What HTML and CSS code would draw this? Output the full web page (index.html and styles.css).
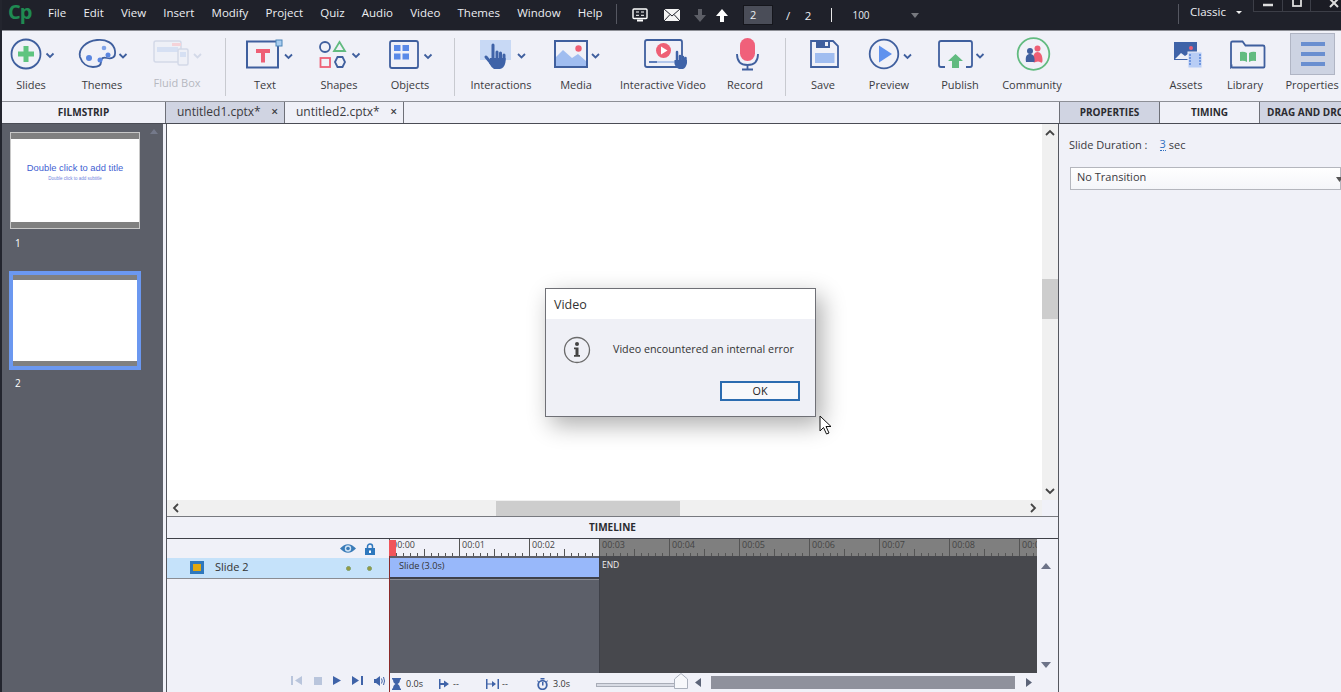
FILE: index.html
```html
<!DOCTYPE html>
<html lang="en">
<head>
<meta charset="utf-8">
<title>Adobe Captivate</title>
<link rel="stylesheet" href="styles.css">
</head>
<body>
<div class="app">
  <header class="topbar">
    <div class="logo">Cp</div>
    <nav class="menu">
      <span>File</span><span>Edit</span><span>View</span><span>Insert</span><span>Modify</span><span>Project</span><span>Quiz</span><span>Audio</span><span>Video</span><span>Themes</span><span>Window</span><span>Help</span>
    </nav>
    <div class="tsep"></div>
    <div class="cell c-a c-first"><svg width="16" height="14" viewBox="0 0 16 14"><rect x="1" y="1" width="14" height="9.5" rx="1" fill="none" stroke="#fff" stroke-width="1.4"/><path d="M4 4h3M9 4h3M4 7.300h3M9 7.300h3" stroke="#fff"/><path d="M5 12.500h6" stroke="#fff" stroke-width="2"/></svg></div>
    <div class="cell c-a"><svg width="16" height="12" viewBox="0 0 16 12"><rect width="16" height="12" fill="#f4f4f4"/><path d="M0 0l8 7 8-7M0 12l6-6.500M16 12l-6-6.500" fill="none" stroke="#1f212a"/></svg></div>
    <div class="cell c-b"><svg width="12" height="13" viewBox="0 0 12 13"><path d="M4 0h4v6h4l-6 7-6-7h4z" fill="#5c5e66"/></svg></div>
    <div class="cell c-c"><svg width="12" height="13" viewBox="0 0 12 13"><path d="M4 13h4V7h4L6 0 0 7h4z" fill="#fff"/></svg></div>
    <div class="page-input">2</div>
    <div class="cell c-d">/</div>
    <div class="cell c-e">2</div>
    <div class="cell c-f"><i class="vbar"></i></div>
    <div class="cell c-g">100</div>
    <div class="cell c-h"><svg width="8" height="5" viewBox="0 0 8 5"><path d="M0 0h8L4 5z" fill="#77797f"/></svg></div>
    <div class="tsep tsep-r"></div>
    <div class="classic">Classic</div>
    <svg class="classic-caret" width="6" height="3" viewBox="0 0 6 3"><path d="M0 0h6L3 3z" fill="#eee"/></svg>
    <div class="winctl">
      <span><svg width="10" height="10" viewBox="0 0 10 10"><path d="M0 5h10" stroke="#ddd" stroke-width="2.500"/></svg></span>
      <span><svg width="10" height="10" viewBox="0 0 10 10"><rect x="1" y="-2" width="8" height="8" fill="none" stroke="#ddd" stroke-width="1.800"/></svg></span>
      <span class="winx"><svg width="10" height="10" viewBox="0 0 10 10"><path d="M1 -1l8 8M9 -1l-8 8" stroke="#ddd" stroke-width="2"/></svg></span>
    </div>
  </header>

  <section class="toolbar">
    <div class="tool w-slides">
      <svg width="56" height="44" viewBox="2 31 56 44"><circle cx="26" cy="54" r="14.500" fill="none" stroke="#3f5f9e" stroke-width="1.800"/><path d="M26 46v16M18 54h16" stroke="#5fc47f" stroke-width="5"/><path class="chev" d="M46.500 53.500l3.500 3.500 3.500-3.500"/></svg>
      <span>Slides</span>
    </div>
    <div class="tool w-themes">
      <svg width="88" height="44" viewBox="58 31 88 44"><path d="M80 57c-2-8 6-16 17-17 9-1 17 3 18 11 1 7-4 8-8 7-4-1-6 0-6 4 0 4-3 5-8 5-6 0-11-4-13-10z" fill="none" stroke="#3f5f9e" stroke-width="1.800"/><circle cx="89" cy="58" r="3" fill="#5a86e0"/><circle cx="100" cy="60" r="2.500" fill="#5a86e0"/><circle cx="104" cy="48" r="2.300" fill="#7fa3e8"/><circle cx="108" cy="55" r="2.500" fill="#5a86e0"/><path class="chev" d="M119.500 54l3.500 3.500 3.500-3.500"/></svg>
      <span>Themes</span>
    </div>
    <div class="tool w-fluid off">
      <svg width="62" height="44" viewBox="146 31 62 44"><rect x="154" y="41" width="27" height="21" rx="2" fill="#eef0f7" stroke="#d3d9e8" stroke-width="1.500"/><rect x="157" y="47" width="21" height="5" fill="#d6e0f3"/><rect x="172" y="43" width="9" height="3" fill="#f5d3d9"/><rect x="178" y="49" width="10" height="16" rx="1.500" fill="#eef0f7" stroke="#d3d9e8" stroke-width="1.500"/><rect x="180" y="52" width="6" height="5" fill="#d6e0f3"/><path class="chev pale" d="M194 54l3.500 3.500 3.500-3.500"/></svg>
      <span>Fluid Box</span>
    </div>
    <i class="sep s1"></i>
    <div class="tool w-text">
      <svg width="78" height="44" viewBox="226 31 78 44"><path d="M276 41.500h-29v26h31v-22" fill="none" stroke="#3f5f9e" stroke-width="2"/><rect x="276" y="40" width="6" height="6" fill="#a9cdf0" stroke="#4b85b8"/><path d="M256 49h14v4h-5v9.500h-4v-9.500h-5z" fill="#ee5f75"/><path class="chev" d="M285 54.500l3.500 3.500 3.500-3.500"/></svg>
      <span>Text</span>
    </div>
    <div class="tool w-shapes">
      <svg width="70" height="44" viewBox="304 31 70 44"><circle cx="325" cy="47" r="5" fill="none" stroke="#3f5f9e" stroke-width="1.800"/><path d="M339.500 42l5.500 9h-11z" fill="none" stroke="#62bb80" stroke-width="1.800"/><rect x="320.500" y="58" width="9.500" height="9" fill="none" stroke="#ee5f75" stroke-width="1.800"/><path d="M335 62l2.500-5h5l2.500 5-2.500 5h-5z" fill="none" stroke="#3f5f9e" stroke-width="1.800"/><path class="chev" d="M352.500 53.500l3.500 3.500 3.500-3.500"/></svg>
      <span>Shapes</span>
    </div>
    <div class="tool w-objects">
      <svg width="72" height="44" viewBox="374 31 72 44"><rect x="390" y="41" width="28" height="27" rx="2" fill="none" stroke="#3f5f9e" stroke-width="1.800"/><path d="M394 45h6.500v6H394zM402.500 45h6.500v6h-6.500zM394 53.500h6.500v6H394zM402.500 53.500h6.500v6h-6.500z" fill="#5a8ae8"/><path class="chev" d="M424.500 54.500l3.500 3.500 3.500-3.500"/></svg>
      <span>Objects</span>
    </div>
    <i class="sep s2"></i>
    <div class="tool w-inter">
      <svg width="92" height="44" viewBox="455 31 92 44"><rect x="480" y="40" width="31" height="20" fill="#c8d9f5"/><path d="M493 45v15M497 52v8M500.500 53v7M504 55v5M486 57l5 6" stroke="#3f63a8" stroke-width="3" stroke-linecap="round"/><path d="M490 58h15.500v4q-1 6-5.500 7h-6q-3-2-5-6z" fill="#3f63a8"/><path class="chev" d="M518 54l3.500 3.500 3.500-3.500"/></svg>
      <span>Interactions</span>
    </div>
    <div class="tool w-media">
      <svg width="58" height="44" viewBox="547 31 58 44"><path d="M555 58l8-8 9 8 6-4 8 7v6h-31z" fill="#a0bdf0"/><rect x="555" y="41" width="32" height="26" fill="none" stroke="#3f5f9e" stroke-width="2"/><circle cx="578.500" cy="48.500" r="3.200" fill="#ee5f75"/><path class="chev" d="M592 54l3.500 3.500 3.500-3.500"/></svg>
      <span>Media</span>
    </div>
    <div class="tool w-iv">
      <svg width="116" height="44" viewBox="605 31 116 44"><rect x="645" y="40" width="37" height="27" rx="2" fill="none" stroke="#3f5f9e" stroke-width="1.800"/><circle cx="663.500" cy="50.500" r="7.500" fill="#ee5f75"/><path d="M661 46.500l6.500 4-6.500 4z" fill="#fff"/><path d="M649 62h26" stroke="#9fb9e8" stroke-width="1.500"/><path d="M649 62h8" stroke="#3f63a8" stroke-width="1.500"/><path d="M677 52v10M680 56v6M683 57v5M685.500 58v4" stroke="#3f63a8" stroke-width="2.500" stroke-linecap="round"/><path d="M674.500 60h12.500v3q-1 5-4 6h-4q-3-1-4.500-5z" fill="#3f63a8"/></svg>
      <span>Interactive Video</span>
    </div>
    <div class="tool w-rec">
      <svg width="48" height="44" viewBox="721 31 48 44"><rect x="740" y="38" width="15" height="23" rx="7.500" fill="#f0607a"/><path d="M737 54q0 11 10.500 11t10.500-11M747.500 65v4M742 69.500h11" fill="none" stroke="#3f5f9e" stroke-width="1.800"/></svg>
      <span>Record</span>
    </div>
    <i class="sep s3"></i>
    <div class="tool w-save">
      <svg width="74" height="44" viewBox="786 31 74 44"><path d="M811 41h22l5 5v21h-27z" fill="none" stroke="#3f5f9e" stroke-width="1.800"/><rect x="816" y="41" width="14" height="7" fill="#3f5f9e"/><rect x="825" y="42" width="3" height="4" fill="#eef0f8"/><rect x="815" y="53" width="19.500" height="10" fill="#a0bdf0"/></svg>
      <span>Save</span>
    </div>
    <div class="tool w-prev">
      <svg width="58" height="44" viewBox="860 31 58 44"><circle cx="884" cy="54" r="14.300" fill="none" stroke="#3f5f9e" stroke-width="1.800"/><path d="M879 45.500l13 8.500-13 8.500z" fill="#5f92ee"/><path class="chev" d="M904 54.500l3.500 3.500 3.500-3.500"/></svg>
      <span>Preview</span>
    </div>
    <div class="tool w-pub">
      <svg width="84" height="44" viewBox="918 31 84 44"><path d="M945 67h-4a2 2 0 0 1-2-2V43a2 2 0 0 1 2-2h29a2 2 0 0 1 2 2v22a2 2 0 0 1-2 2h-4" fill="none" stroke="#3f5f9e" stroke-width="1.800"/><path d="M955.500 54l7.500 7h-4v7h-7v-7h-4z" fill="#62bb80"/><path class="chev" d="M976.500 54l3.500 3.500 3.500-3.500"/></svg>
      <span>Publish</span>
    </div>
    <div class="tool w-comm">
      <svg width="60" height="44" viewBox="1002 31 60 44"><circle cx="1033.500" cy="54" r="15.800" fill="none" stroke="#62bb80" stroke-width="1.800"/><circle cx="1037.500" cy="48.500" r="3" fill="#ee5f75"/><path d="M1033 60c0-5 1.500-8 4.500-8s5 3 5 8-2 1.500-4.500 1.500-5 3-5-1.500z" fill="#ee5f75"/><circle cx="1030" cy="51" r="3" fill="#3f5f9e"/><path d="M1026 62c-1-6 1-8 4-8s5 2 4.500 8z" fill="#3f5f9e"/></svg>
      <span>Community</span>
    </div>
    <div class="tb-spacer"></div>
    <div class="tool w-assets">
      <svg width="48" height="44" viewBox="1162 31 48 44"><rect x="1174" y="42" width="23" height="18" fill="#3f63a8"/><path d="M1175 59l6-6 4 3 3-2v5z" fill="#eef0f8"/><circle cx="1191" cy="48" r="2" fill="#ee5f75"/><rect x="1188" y="52" width="14" height="16" fill="#b8cdf5" stroke="#eef0f8"/><path d="M1190 54v12M1200 54v12" stroke="#6f97e0" stroke-width="2" stroke-dasharray="2 1"/></svg>
      <span>Assets</span>
    </div>
    <div class="tool w-lib">
      <svg width="70" height="44" viewBox="1210 31 70 44"><path d="M1231 67V43a1.500 1.500 0 0 1 1.500-1.500h10l3 4h17.500a1.500 1.500 0 0 1 1.500 1.500v19.500a1 1 0 0 1-1 1h-31a1 1 0 0 1-1-1z" fill="none" stroke="#3f5f9e" stroke-width="1.800"/><path d="M1240 52q4-1 7 1v9q-3-2-7-1zM1256 52q-4-1-7 1v9q3-2 7-1z" fill="#62bb80"/></svg>
      <span>Library</span>
    </div>
    <div class="tool w-props">
      <svg width="64" height="44" viewBox="1280 31 64 44"><rect x="1290.500" y="33.500" width="44" height="41" fill="#cdd3e2" stroke="#b0b5c4"/><path d="M1301 42h24v4h-24zM1301 52h24v4h-24zM1301 62h24v4h-24z" fill="#6a8fd0"/></svg>
      <span>Properties</span>
    </div>
  </section>

  <section class="tabrow">
    <div class="fs-head">FILMSTRIP</div>
    <div class="doc-tab dim">untitled1.cptx*<b>×</b></div>
    <div class="doc-tab">untitled2.cptx*<b>×</b></div>
    <div class="tab-fill"></div>
    <div class="panel-tab dim">PROPERTIES</div>
    <div class="panel-tab">TIMING</div>
    <div class="panel-tab dim last">DRAG AND DROP</div>
  </section>

  <main class="workspace">
    <aside class="filmstrip">
      <div class="thumb thumb-1">
        <div class="t-title">Double click to add title</div>
        <div class="t-sub">Double click to add subtitle</div>
      </div>
      <div class="thumb-num n1">1</div>
      <div class="thumb thumb-2"></div>
      <div class="thumb-num n2">2</div>
      <svg class="fs-up" width="8" height="5" viewBox="0 0 8 5"><path d="M4 0l4 5H0z" fill="#74798a"/></svg>
    </aside>

    <div class="center">
      <div class="stage-row">
        <div class="stage"></div>
        <div class="vscroll">
          <svg width="10" height="7" viewBox="0 0 10 7"><path d="M1 6l4-4 4 4" fill="none" stroke="#444" stroke-width="1.800"/></svg>
          <div class="vthumb"></div>
          <svg width="10" height="7" viewBox="0 0 10 7"><path d="M1 1l4 4 4-4" fill="none" stroke="#444" stroke-width="1.800"/></svg>
        </div>
      </div>
      <div class="hscroll">
        <svg width="7" height="10" viewBox="0 0 7 10"><path d="M6 1L2 5l4 4" fill="none" stroke="#444" stroke-width="1.800"/></svg>
        <div class="hthumb"></div>
        <svg width="7" height="10" viewBox="0 0 7 10"><path d="M1 1l4 4-4 4" fill="none" stroke="#444" stroke-width="1.800"/></svg>
      </div>
      <div class="tl-head">TIMELINE</div>
      <div class="timeline">
        <div class="tl-left">
          <div class="tl-icons">
            <svg width="16" height="11" viewBox="0 0 16 11"><path d="M0 5.500Q8-3 16 5.500 8 14 0 5.500z" fill="#3a7cb8"/><circle cx="8" cy="5.500" r="3.200" fill="#cfe3f5"/><circle cx="8" cy="5.500" r="1.800" fill="#3a7cb8"/></svg>
            <svg width="10" height="12" viewBox="0 0 10 12"><path d="M2.500 6V3.500a2.500 2.500 0 0 1 5 0V6" fill="none" stroke="#2f78bd" stroke-width="1.500"/><rect y="5" width="10" height="7" fill="#2f78bd"/><rect x="4" y="7.500" width="2" height="2.500" fill="#fff"/></svg>
          </div>
          <div class="tl-row">
            <i class="swatch"></i>
            <span>Slide 2</span>
            <i class="dot d1"></i>
            <i class="dot d2"></i>
          </div>
          <div class="tl-empty"></div>
          <div class="tl-controls">
            <svg width="12" height="9" viewBox="0 0 12 9"><path d="M0 0h2v9H0zM11 0v9L4 4.500z" fill="#b9c5dc"/></svg>
            <svg width="8" height="8" viewBox="0 0 8 8"><rect width="8" height="8" fill="#b9c5dc"/></svg>
            <svg width="8" height="9" viewBox="0 0 8 9"><path d="M0 0l8 4.500L0 9z" fill="#3f63a8"/></svg>
            <svg width="11" height="9" viewBox="0 0 11 9"><path d="M0 0l7 4.500L0 9zM9 0h2v9H9z" fill="#3f63a8"/></svg>
            <svg width="11" height="10" viewBox="0 0 11 10"><path d="M0 3h2l4-3v10L2 7H0z" fill="#3f63a8"/><path d="M7.500 2.500q1.500 2.500 0 5M9.500 1q2 4 0 8" fill="none" stroke="#3f63a8"/></svg>
          </div>
        </div>
        <div class="tl-main">
          <div class="ruler">
            <div class="sec lite">00:00</div><div class="sec lite">00:01</div><div class="sec lite">00:02</div>
            <div class="sec">00:03</div><div class="sec">00:04</div><div class="sec">00:05</div><div class="sec">00:06</div><div class="sec">00:07</div><div class="sec">00:08</div><div class="sec">00:09</div>
          </div>
          <div class="tracks">
            <div class="track-slide">
              <div class="slide-bar">Slide (3.0s)</div>
            </div>
            <div class="track-end">END</div>
          </div>
          <div class="status">
            <svg class="st-ic i1" width="9" height="12" viewBox="0 0 9 12"><path d="M0 0h9v1.500H8Q8 5 5.500 6 8 7 8 10.500h1V12H0v-1.500h1Q1 7 3.500 6 1 5 1 1.500H0z" fill="#3f63a8"/></svg>
            <span class="st-t t1">0.0s</span>
            <svg class="st-ic i2" width="10" height="10" viewBox="0 0 10 10"><path d="M0 0h1.500v10H0zM1.500 4h3.500V1.500L10 5l-5 3.500V6H1.500z" fill="#3f63a8"/></svg>
            <span class="st-t t2">--</span>
            <svg class="st-ic i3" width="13" height="10" viewBox="0 0 13 10"><path d="M0 0h1.500v10H0zM11.500 0H13v10h-1.500zM1.500 4.500h4.500V2l4 3-4 3V5.500H1.500z" fill="#3f63a8"/></svg>
            <span class="st-t t3">--</span>
            <svg class="st-ic i4" width="11" height="12" viewBox="0 0 11 12"><circle cx="5.500" cy="7" r="4.300" fill="none" stroke="#3f63a8" stroke-width="1.800"/><path d="M3.500 0h4v1.500h-4zM5 4v3.500h1.500V4zM0 2l2 1.500-1 1zM11 2L9 3.500l1 1z" fill="#3f63a8"/></svg>
            <span class="st-t t4">3.0s</span>
            <div class="zoom-track"><svg class="zoom-thumb" width="14" height="16" viewBox="0 0 14 16"><path d="M.5 15.500V6L7 .5 13.500 6v9.500z" fill="#f7f8fb" stroke="#aab0bc"/></svg></div>
            <svg class="sb-l" width="6" height="9" viewBox="0 0 6 9"><path d="M6 0v9L0 4.500z" fill="#5c6478"/></svg>
            <div class="sb-thumb"></div>
            <svg class="sb-r" width="6" height="9" viewBox="0 0 6 9"><path d="M0 0v9l6-4.500z" fill="#5c6478"/></svg>
          </div>
        </div>
        <div class="tl-right">
          <svg width="10" height="6" viewBox="0 0 10 6"><path d="M5 0l5 6H0z" fill="#6c7388"/></svg>
          <svg width="10" height="6" viewBox="0 0 10 6"><path d="M0 0h10L5 6z" fill="#6c7388"/></svg>
        </div>
      </div>
    </div>

    <aside class="props">
      <div class="dur">Slide Duration :<span class="dur-n">3</span><span class="dur-u">sec</span></div>
      <div class="select">No Transition<svg width="7" height="5" viewBox="0 0 7 5"><path d="M0 0h7L3.500 5z" fill="#555"/></svg></div>
    </aside>
  </main>

  <div class="dialog">
    <div class="dlg-title">Video</div>
    <div class="dlg-body">
      <div class="dlg-msg">
        <svg width="28" height="28" viewBox="0 0 28 28"><circle cx="14" cy="14" r="12.500" fill="none" stroke="#6b6b6b" stroke-width="1.300"/><circle cx="14" cy="8" r="2" fill="#444"/><path d="M11 11.500h4.500V19H17v1.800h-6V19h1.500v-5.700H11z" fill="#444"/></svg>
        <span>Video encountered an internal error</span>
      </div>
      <button class="dlg-ok">OK</button>
    </div>
  </div>
  <svg class="cursor" width="14" height="20" viewBox="0 0 14 20"><path d="M1 1v15l3.500-3.500 3 6.500 2.500-1-3-6.500h5z" fill="#fff" stroke="#111"/></svg>
  <i class="scrubber"></i>
</div>
</body>
</html>
```

FILE: styles.css
```css
* { box-sizing: border-box; }
html, body { margin: 0; padding: 0; height: 100%; overflow: hidden; background: #f0f1f8; }
body { font-family: "Open Sans", "Noto Sans", sans-serif; color: #333; }
.app { position: relative; width: 1341px; height: 692px; overflow: hidden; display: flex; flex-direction: column; border-left: 2px solid #23252e; }
svg { display: block; flex: none; }

.topbar { flex: none; height: 30px; margin-left: -2px; background: #1f212a; color: #eceef2; display: flex; align-items: center; font-size: 11.500px; position: relative; }
.logo { flex: none; width: 48px; padding-left: 8px; height: 30px; line-height: 24px; font-family: "Open Sans", sans-serif; font-size: 20px; font-weight: 700; color: #1f8a52; letter-spacing: -1px; }
.menu { display: flex; flex: none; align-self: flex-start; width: 568px; height: 24px; align-items: center; gap: 17.200px; }
.tsep { width: 1px; height: 20px; background: #555761; flex: none; margin-top: -2px; }
.cell { flex: none; display: flex; align-items: center; justify-content: center; height: 20px; }
.c-a { width: 32px; }
.c-first { margin-left: 7px; }
.c-b { width: 24px; }
.c-c { width: 20px; }
.c-d { width: 30px; }
.c-e { width: 10px; }
.c-f { width: 36px; }
.c-g { width: 24px; font-size: 10px; }
.c-h { width: 84px; }
.vbar { width: 1px; height: 14px; background: #e8e8e8; }
.page-input { flex: none; margin-left: 11px; width: 30px; height: 20px; padding-left: 6px; background: #4a4d58; border: 1px solid #15161c; line-height: 18px; font-size: 11px; }
.tsep-r { margin-left: 221px; }
.classic { margin-left: 11px; margin-top: -7px; }
.classic-caret { margin-left: 10px; margin-top: -5px; }
.winctl { position: absolute; right: 0; top: 0; width: 88px; height: 12px; display: flex; background: #1b1c24; border: 1px solid #3c3e47; border-top: 0; border-right: 0; }
.winctl span { flex: none; width: 28px; display: flex; justify-content: center; border-left: 1px solid #3c3e47; }
.winctl span:first-child { border-left: 0; }
.winctl .winx { width: 32px; padding-left: 14px; }

.toolbar { flex: none; height: 72px; display: flex; background: #f0f1f8; border-top: 1px solid #8d8f96; border-bottom: 1px solid #8d8f96; }
.tool { flex: none; display: flex; flex-direction: column; align-items: center; font-size: 11px; color: #3a3a3e; }
.tool span { margin-top: 2px; line-height: 16px; white-space: nowrap; }
.chev { fill: none; stroke: #3f5f9e; stroke-width: 1.800; }
.chev.pale { stroke: #d3d9e8; }
.off { color: #b6b8c0; }
.off span { margin-top: 0; }
.w-slides { width: 56px; }
.w-slides span { margin-left: 2px; }
.w-themes { width: 88px; }
.w-fluid { width: 62px; }
.w-text { width: 78px; }
.w-shapes { width: 70px; }
.w-objects { width: 72px; }
.w-inter { width: 92px; }
.w-media { width: 58px; }
.w-iv { width: 116px; }
.w-rec { width: 48px; }
.w-save { width: 74px; }
.w-prev { width: 58px; }
.w-pub { width: 84px; }
.w-comm { width: 60px; }
.w-assets { width: 48px; }
.w-lib { width: 70px; }
.w-props { width: 64px; }
.tb-spacer { width: 100px; flex: none; }
.sep { flex: none; width: 1px; height: 58px; margin-top: 7px; background: #c8cad0; }
.s1 { margin-left: 17px; }
.s2 { margin-left: 8px; }
.s3 { margin-left: 16px; }

.tabrow { flex: none; height: 22px; display: flex; background: #f0f1f8; border-bottom: 1px solid #4a4c55; font-size: 12px; }
.fs-head { width: 164px; flex: none; text-align: center; font-size: 10px; font-weight: 700; line-height: 21px; color: #2b2b30; border-right: 1px solid #6e7078; }
.doc-tab { width: 119px; flex: none; padding-left: 11px; line-height: 19px; border-right: 1px solid #6e7078; position: relative; color: #3a3a3e; }
.doc-tab b { position: absolute; right: 6px; top: 0; font-size: 12px; font-weight: 600; }
.dim { background: #d0d4e2; }
.tab-fill { flex: 1; }
.panel-tab { width: 100px; flex: none; text-align: center; font-size: 10px; font-weight: 700; line-height: 21px; border-left: 1px solid #6e7078; color: #2b2b30; white-space: nowrap; }
.panel-tab.last { width: 82px; padding-left: 7px; text-align: left; overflow: hidden; }

.workspace { flex: 1; display: flex; min-height: 0; }
.filmstrip { flex: none; width: 164px; border-right: 3px solid #f0f1f8; background: #5c5f69; padding: 8px 0 0 8px; position: relative; }
.thumb { background: #fff; }
.thumb-1 { width: 130px; height: 97px; border: 1px solid #c8c8c8; border-top: 7px solid #808080; border-bottom: 7px solid #808080; outline: 1px solid #c8c8c8; outline-offset: -1px; display: flex; flex-direction: column; align-items: center; padding-top: 23px; font-family: "Liberation Sans", sans-serif; color: #3f5fd2; }
.t-title { font-size: 9.400px; line-height: 12px; }
.t-sub { font-size: 4.500px; line-height: 6px; margin-top: 2px; color: #6f86e0; }
.thumb-2 { width: 132px; height: 99px; margin-left: -1px; border: 4px solid #6b98f0; box-shadow: inset 0 5px 0 #808080, inset 0 -5px 0 #808080; }
.thumb-num { font-size: 10px; color: #fff; padding-left: 5px; line-height: 14px; }
.n1 { margin-top: 7px; margin-bottom: 21px; }
.n2 { margin-top: 6px; }
.fs-up { position: absolute; top: 5px; right: 5px; }

.center { flex: none; width: 893px; display: flex; flex-direction: column; border-left: 1px solid #55575f; border-right: 1px solid #55575f; }
.stage-row { flex: none; height: 376px; display: flex; }
.stage { flex: 1; background: #fff; }
.vscroll { flex: none; width: 16px; background: #f0f0f0; display: flex; flex-direction: column; align-items: center; padding-top: 5px; }
.vthumb { width: 16px; height: 40px; margin-top: 143px; margin-bottom: 169px; background: #cdcdcd; }
.hscroll { flex: none; height: 16px; width: 875px; background: #f0f0f0; display: flex; align-items: center; padding-left: 5px; }
.hthumb { width: 184px; height: 15px; margin-left: 317px; margin-right: 350px; background: #cdcdcd; }
.tl-head { flex: none; height: 23px; border-top: 1px solid #77797f; border-bottom: 1px solid #3e4048; text-align: center; font-size: 10px; font-weight: 700; line-height: 21px; color: #2b2b30; }
.timeline { flex: 1; min-height: 0; display: grid; grid-template-columns: 222px 648px 1fr; background: #f0f1f8; }
.tl-left { display: flex; flex-direction: column; }
.tl-icons { flex: none; height: 19px; display: flex; align-items: center; justify-content: flex-end; gap: 9px; padding-right: 14px; }
.tl-row { flex: none; height: 21px; display: flex; align-items: center; background: #c5e2fa; border-bottom: 1px solid #8a8c92; font-size: 11px; line-height: 16px; position: relative; padding-left: 23px; }
.tl-row span { margin-top: -3px; }
.swatch { width: 14px; height: 13px; border: 3px solid #2f78bd; background: #e2a80f; margin-right: 11px; margin-top: -1px; }
.dot { position: absolute; top: 8px; width: 5px; height: 5px; border-radius: 50%; background: #9a9a3f; border: 1px solid #7ca06a; }
.d1 { left: 179px; }
.d2 { left: 200px; }
.tl-empty { flex: 1; }
.tl-controls { flex: none; height: 19px; display: flex; align-items: center; gap: 11px; padding-left: 124px; padding-bottom: 4px; }

.tl-main { display: flex; flex-direction: column; min-width: 0; }
.ruler { flex: none; height: 17px; display: flex; overflow: hidden; }
.sec { flex: none; width: 70px; height: 17px; padding-left: 2px; font-size: 9px; line-height: 11px; color: #444; border-left: 1px solid #555; background-color: #7f7f7f; background-image: linear-gradient(#555, #555), repeating-linear-gradient(to right, transparent 0 6px, #555 6px 7px); background-size: 1px 7px, 100% 3px; background-position: 34px bottom, bottom; background-repeat: no-repeat; }
.sec.lite { background-color: #f0f1f8; }
.tracks { flex: 1; min-height: 0; display: flex; }
.track-slide { flex: none; width: 211px; background: #5c5f69; border-left: 1px solid #8b2a2a; border-right: 1px solid #3e4048; padding-top: 2px; }
.slide-bar { height: 21px; background: #98b8fa; border-bottom: 2px solid #3e4048; padding-left: 9px; font-size: 9.200px; line-height: 16px; color: #333; box-shadow: 0 1px 0 #8a8c92; }
.track-end { flex: 1; background: #47484d; padding: 2px 0 0 2px; font-size: 8.500px; line-height: 14px; color: #eee; }
.status { flex: none; height: 19px; display: flex; align-items: center; font-size: 9px; border-left: 1px solid #8b2a2a; background: #f0f1f8; }
.st-ic { margin-top: 2px; }
.st-t { margin-top: 1px; flex: none; }
.i1 { margin-left: 2px; }
.t1 { margin-left: 5px; width: 33px; }
.t2 { margin-left: 4px; width: 33px; }
.t3 { margin-left: 3px; width: 35px; }
.t4 { margin-left: 5px; width: 43px; }
.zoom-track { flex: none; position: relative; width: 85px; height: 4px; margin-top: 5px; background: #d8dbe4; border: 1px solid #a9adb8; }
.zoom-thumb { position: absolute; right: -8px; top: -11px; }
.sb-l { margin-left: 14px; }
.sb-thumb { flex: none; width: 304px; height: 13px; margin-left: 10px; background: #8f919c; }
.sb-r { margin-left: 11px; }
.tl-right { display: flex; flex-direction: column; align-items: center; justify-content: flex-start; gap: 93px; padding-top: 24px; padding-right: 4px; }

.props { flex: 1; padding: 12px 0 0 10px; font-size: 11px; color: #3a3a3e; }
.dur { line-height: 18px; display: flex; }
.dur-n { margin-left: 12px; color: #2f6fc0; border-bottom: 1px dotted #2f6fc0; height: 15px; line-height: 16px; }
.dur-u { margin-left: 3px; }
.select { margin-top: 13px; margin-left: 1px; height: 23px; border: 1px solid #b4b6bd; background: linear-gradient(#fff, #f4f5f9); padding-left: 6px; line-height: 18px; position: relative; }
.select svg { position: absolute; right: -3px; top: 9px; }

.dialog { position: absolute; left: 543px; top: 288px; width: 271px; height: 129px; border: 1px solid #6f7076; background: #eff0f6; box-shadow: 6px 8px 22px rgba(0,0,0,.32); display: flex; flex-direction: column; }
.dlg-title { flex: none; height: 30px; background: #fff; padding-left: 8px; font-size: 12.500px; line-height: 31px; color: #333; }
.dlg-body { flex: 1; display: flex; flex-direction: column; }
.dlg-msg { display: flex; align-items: center; padding: 17px 0 0 17px; font-size: 10.750px; }
.dlg-msg span { margin-left: 22px; margin-top: -2px; }
.dlg-ok { margin: 17px 0 0 174px; width: 80px; height: 20px; padding: 0; border: 2px solid #2b6cb0; background: #f7f8fb; font: 10.750px "Open Sans", sans-serif; color: #222; }
.cursor { position: absolute; left: 817px; top: 415px; }
.scrubber { position: absolute; left: 387px; top: 540px; width: 7px; height: 16px; background: #f0555a; }
```
